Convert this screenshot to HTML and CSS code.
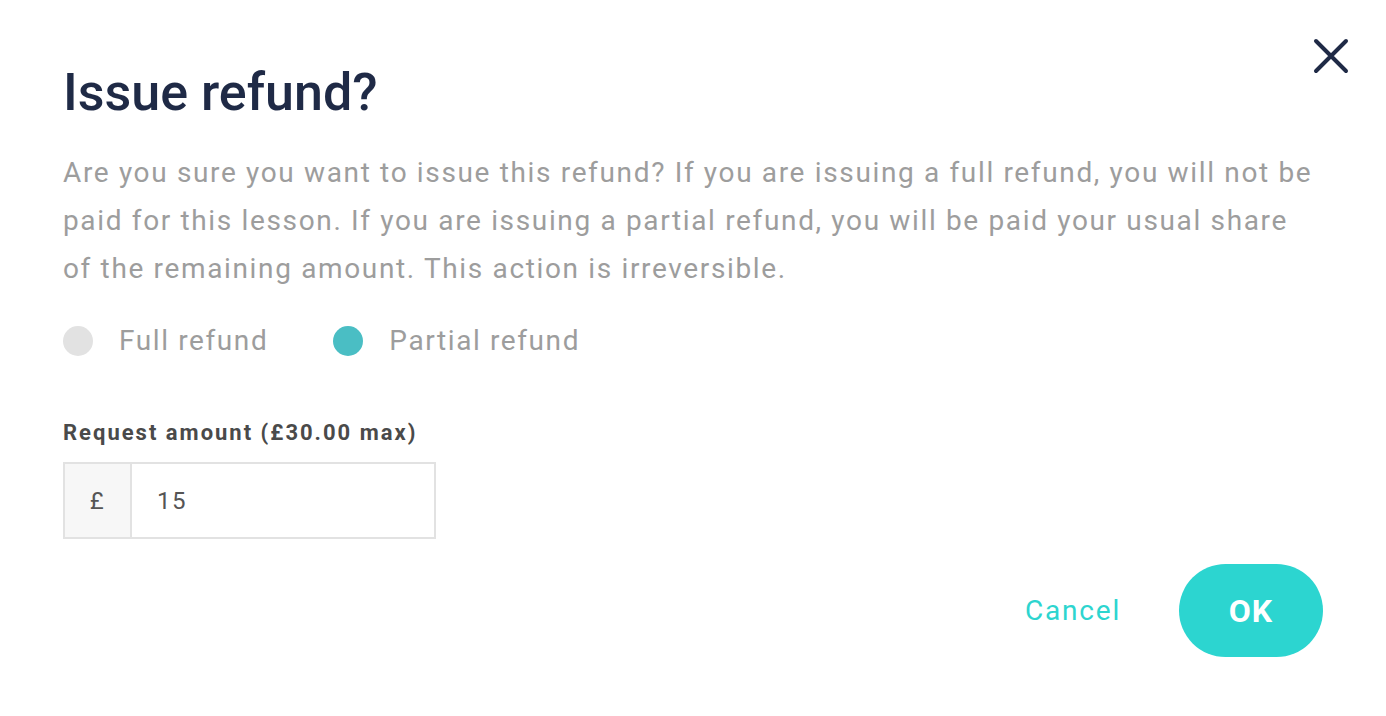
FILE: index.html
```html
<!DOCTYPE html>
<html lang="en">
<head>
    <meta charset="UTF-8">
    <meta name="viewport" content="width=device-width, initial-scale=1.0">
    <title>Issue refund</title>
    <link rel="stylesheet" href="styles.css">
</head>
<body>
    <div class="modal">
        <button class="close" type="button" aria-label="Close">
            <svg width="36" height="36" viewBox="0 0 36 36">
                <path d="M3 3 L33 33 M33 3 L3 33" stroke="#1f2a46" stroke-width="4" stroke-linecap="round" fill="none"/>
            </svg>
        </button>

        <h1 class="title">Issue refund?</h1>

        <p class="desc">Are you sure you want to issue this refund? If you are issuing a full refund, you will not be paid for this lesson. If you are issuing a partial refund, you will be paid your usual share of the remaining amount. This action is irreversible.</p>

        <div class="options">
            <label class="option">
                <span class="dot"></span>
                Full refund
            </label>
            <label class="option">
                <span class="dot on"></span>
                Partial refund
            </label>
        </div>

        <div class="field">
            <div class="field-label">Request amount (£30.00 max)</div>
            <div class="input-group">
                <span class="prefix">£</span>
                <span class="value">15</span>
            </div>
        </div>

        <div class="actions">
            <button class="btn-cancel" type="button">Cancel</button>
            <button class="btn-ok" type="button">OK</button>
        </div>
    </div>
</body>
</html>
```

FILE: styles.css
```css
body {
    margin: 0;
    background: #fff;
    font-family: Roboto, "Liberation Sans", sans-serif;
}

.modal {
    position: relative;
    padding: 63px 63px 0 63px;
}

.close {
    position: absolute;
    top: 38px; right: 37px;
    border: 0; background: none; padding: 0;
    width: 36px; height: 36px;
}

.title {
    margin: 0;
    font-size: 52px;
    font-weight: 500;
    color: #1f2a46;
    line-height: 60px;
}

.desc {
    margin: 26px 0 0 0;
    max-width: 1252px;
    font-size: 28px;
    line-height: 48px;
    letter-spacing: 1.65px;
    color: #9d9d9d;
}

.options {
    display: flex;
    gap: 65px;
    margin-top: 31px;
}
.option {
    display: flex;
    align-items: center;
    gap: 26px;
    font-size: 28px;
    letter-spacing: 1.6px;
    color: #9d9d9d;
}
.dot {
    width: 30px; height: 30px;
    border-radius: 50%;
    background: #e2e2e2;
}
.dot.on { background: #4abec4; }

.field { margin-top: 63px; }
.field-label {
    font-size: 22px;
    font-weight: 700;
    letter-spacing: 2px;
    color: #4a4a4a;
}
.input-group {
    display: flex;
    margin-top: 17px;
    width: 369px;
    height: 73px;
    border: 2px solid #e2e2e2;
    font-size: 24px;
    letter-spacing: 1.5px;
    color: #555;
}
.prefix {
    width: 65px;
    display: flex; align-items: center; justify-content: center;
    background: #f7f7f7;
    border-right: 2px solid #e2e2e2;
}
.value {
    display: flex; align-items: center;
    padding-left: 25px;
}

.actions {
    display: flex;
    justify-content: flex-end;
    align-items: center;
    gap: 58px;
    margin-top: 25px;
    width: 1260px;
}
.btn-cancel {
    border: 0; background: none; padding: 0;
    font-family: inherit;
    font-size: 28px;
    letter-spacing: 1.8px;
    color: #2dd5cf;
}
.btn-ok {
    border: 0;
    width: 144px; height: 93px;
    border-radius: 47px;
    background: #2cd5d0;
    color: #fff;
    font-family: inherit;
    font-size: 32px;
    font-weight: 700;
    letter-spacing: 1px;
}
```
